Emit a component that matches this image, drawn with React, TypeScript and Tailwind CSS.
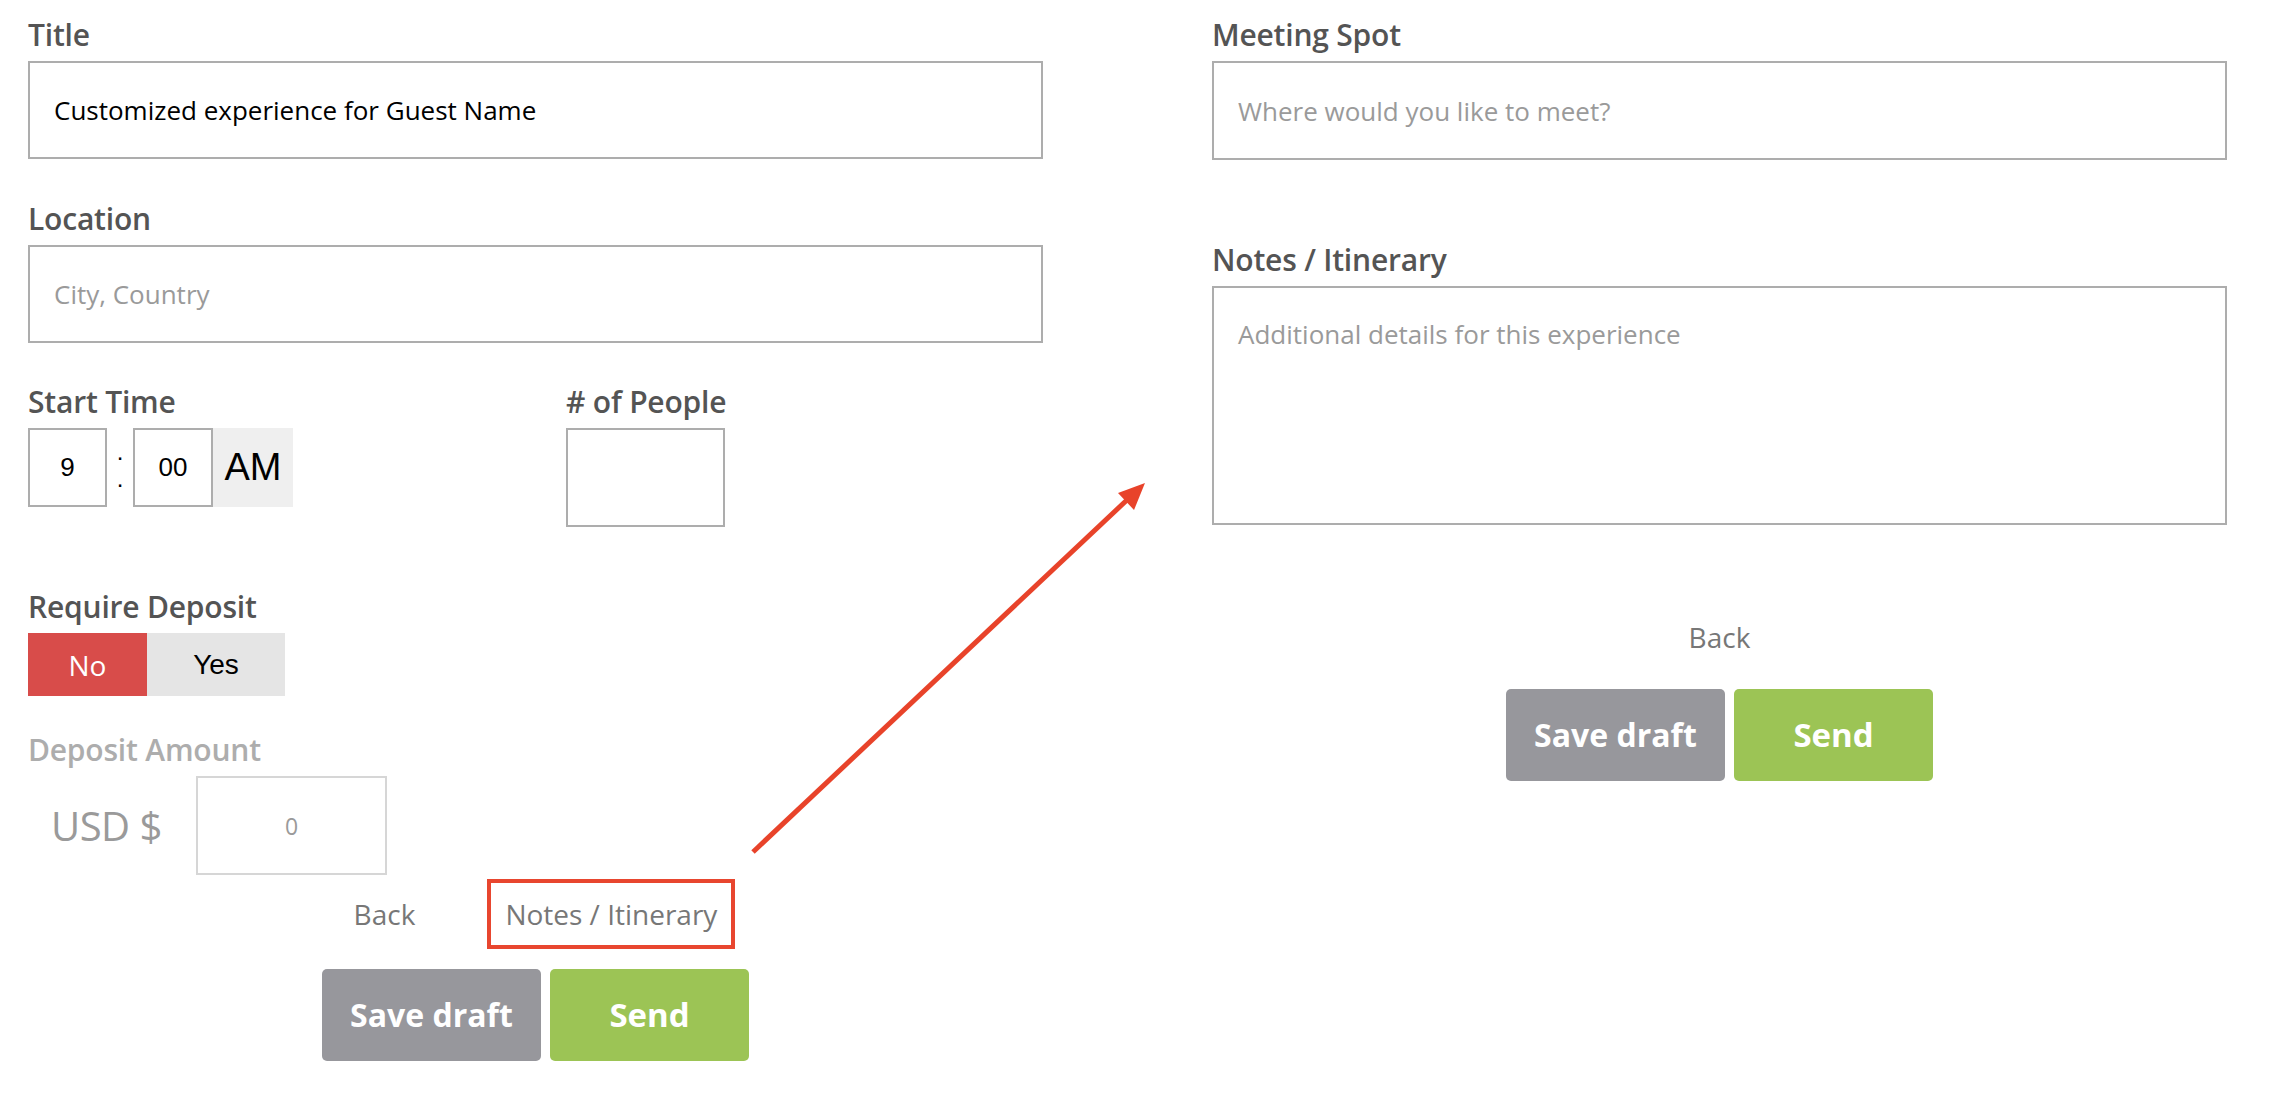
import React from "react";

const SANS = "font-['Open_Sans',sans-serif]";
const ARIAL = "font-['Liberation_Sans',Arial,sans-serif]";

function Label({ children, muted = false }: { children: React.ReactNode; muted?: boolean }) {
  return (
    <label className={`mb-[11px] block text-[30px] font-semibold leading-[30px] tracking-[-0.2px] ${muted ? "text-[#adadad]" : "text-[#545454]"}`}>
      {children}
    </label>
  );
}

function TextBox({ value, placeholder, h = "h-[98px]" }: { value?: string; placeholder?: string; h?: string }) {
  return (
    <input
      readOnly
      defaultValue={value}
      placeholder={placeholder}
      className={`${h} w-full border-2 border-[#adadad] bg-white px-[24px] text-[26px] text-black outline-none placeholder:text-[#9a9a9a]`}
    />
  );
}

function LinkItem({ children, boxed = false }: { children: React.ReactNode; boxed?: boolean }) {
  return (
    <a className={`flex h-[70px] items-center border-[4px] px-[14px] text-[28px] text-[#777] ${boxed ? "border-[#e8462f]" : "border-transparent"}`}>
      {children}
    </a>
  );
}

function Buttons() {
  return (
    <div className="flex justify-center gap-[9px]">
      <button className="h-[92px] w-[219px] rounded-[5px] bg-[#97979c] text-[32px] font-bold text-white">Save draft</button>
      <button className="h-[92px] w-[199px] rounded-[5px] bg-[#9cc455] text-[33px] font-bold text-white">Send</button>
    </div>
  );
}

export default function App() {
  return (
    <div className={`relative h-[1098px] w-full overflow-hidden bg-white pl-[28px] pt-[20px] ${SANS}`}>
      <div className="flex gap-[169px]">
        {/* before */}
        <div className="flex w-[1015px] flex-col">
          <Label>Title</Label>
          <TextBox value="Customized experience for Guest Name" />

          <div className="mt-[45px]">
            <Label>Location</Label>
            <TextBox placeholder="City, Country" />
          </div>

          <div className="mt-[44px] flex">
            <div className="w-[538px]">
              <Label>Start Time</Label>
              <div className={`flex h-[79px] ${ARIAL}`}>
                <input readOnly defaultValue="9" className="h-[79px] w-[79px] border-2 border-[#adadad] text-center text-[26px] text-black outline-none" />
                <div className="flex w-[26px] flex-col items-center pt-[10px] text-[24px] leading-[27px] text-black">
                  <span>.</span>
                  <span>.</span>
                </div>
                <input readOnly defaultValue="00" className="h-[79px] w-[80px] border-2 border-[#adadad] text-center text-[26px] text-black outline-none" />
                <div className="flex h-[79px] w-[80px] items-center justify-center bg-[#efefef] text-[38px] text-black">AM</div>
              </div>
            </div>
            <div>
              <Label># of People</Label>
              <input readOnly className="h-[99px] w-[159px] border-2 border-[#adadad] outline-none" />
            </div>
          </div>

          <div className="mt-[65px]">
            <Label>Require Deposit</Label>
            <div className="flex h-[63px] w-[257px] text-[28px]">
              <button className="w-[119px] bg-[#d84c4a] text-white">No</button>
              <button className={`w-[138px] bg-[#e5e5e5] text-black ${ARIAL}`}>Yes</button>
            </div>
          </div>

          <div className="mt-[39px]">
            <Label muted>Deposit Amount</Label>
            <div className="flex items-center">
              <span className="w-[168px] pl-[23px] text-[40px] tracking-[-0.5px] text-[#9a9a9a]">USD $</span>
              <input readOnly defaultValue="0" className="h-[99px] w-[191px] border-2 border-[#d6d6d6] text-center text-[23px] text-[#9a9a9a] outline-none" />
            </div>
          </div>

          <div className="mt-[4px] flex justify-center gap-[54px]">
            <LinkItem>Back</LinkItem>
            <LinkItem boxed>Notes / Itinerary</LinkItem>
          </div>

          <div className="mt-[20px]">
            <Buttons />
          </div>
        </div>

        {/* after */}
        <div className="flex w-[1015px] flex-col">
          <Label>Meeting Spot</Label>
          <TextBox placeholder="Where would you like to meet?" h="h-[99px]" />

          <div className="mt-[85px]">
            <Label>Notes / Itinerary</Label>
            <textarea
              readOnly
              placeholder="Additional details for this experience"
              className="h-[239px] w-full resize-none border-2 border-[#adadad] px-[24px] pt-[31px] text-[26px] leading-[30px] outline-none placeholder:text-[#9a9a9a]"
            />
          </div>

          <div className="mt-[71px] flex justify-center">
            <LinkItem>Back</LinkItem>
          </div>

          <div className="mt-[17px]">
            <Buttons />
          </div>
        </div>
      </div>

      {/* annotation arrow */}
      <svg className="pointer-events-none absolute left-0 top-0" width="2275" height="1098" viewBox="0 0 2275 1098">
        <line x1="753" y1="852" x2="1128" y2="499" stroke="#e8432a" strokeWidth="5" />
        <polygon points="1145,483 1134,510 1118,493" fill="#e8432a" />
      </svg>
    </div>
  );
}
